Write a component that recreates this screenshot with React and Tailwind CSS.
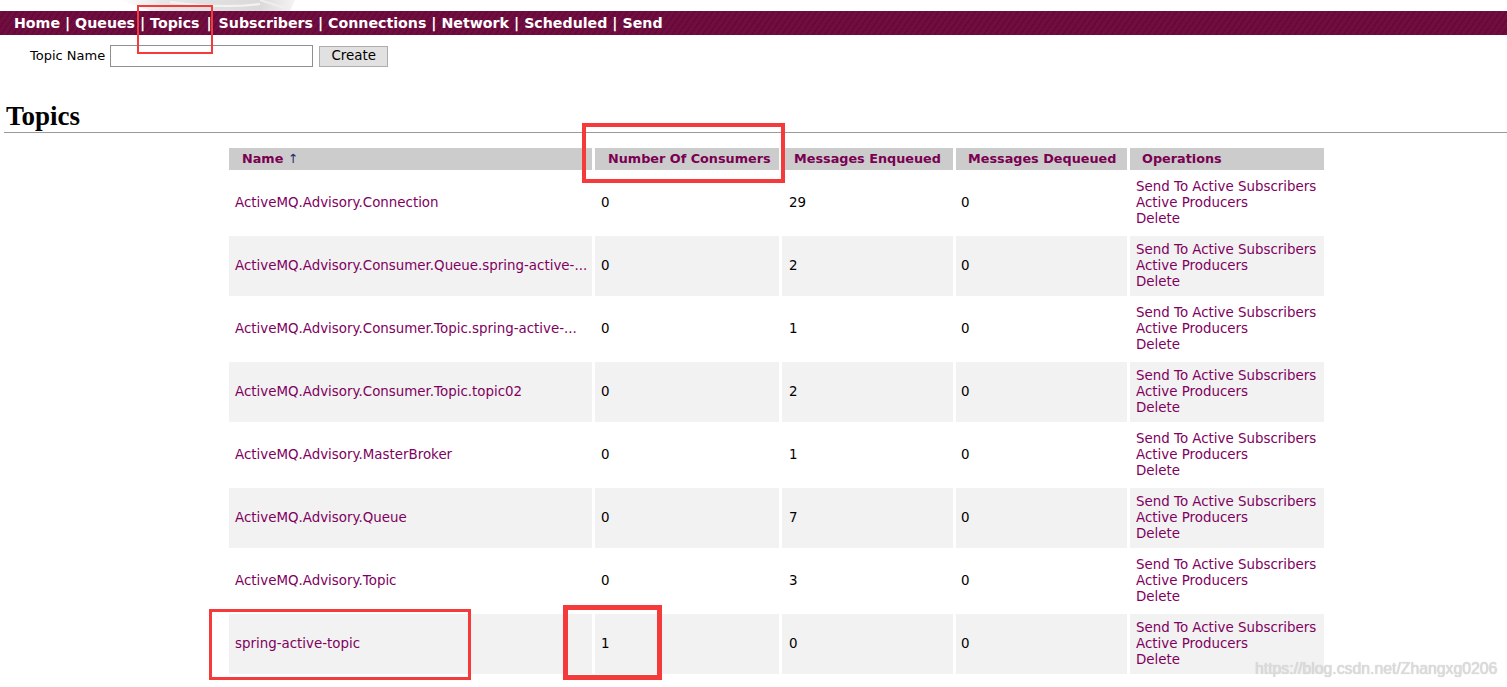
import React from "react";

const topics = [
  { name: "ActiveMQ.Advisory.Connection", consumers: 0, enq: 29, deq: 0 },
  { name: "ActiveMQ.Advisory.Consumer.Queue.spring-active-...", consumers: 0, enq: 2, deq: 0 },
  { name: "ActiveMQ.Advisory.Consumer.Topic.spring-active-...", consumers: 0, enq: 1, deq: 0 },
  { name: "ActiveMQ.Advisory.Consumer.Topic.topic02", consumers: 0, enq: 2, deq: 0 },
  { name: "ActiveMQ.Advisory.MasterBroker", consumers: 0, enq: 1, deq: 0 },
  { name: "ActiveMQ.Advisory.Queue", consumers: 0, enq: 7, deq: 0 },
  { name: "ActiveMQ.Advisory.Topic", consumers: 0, enq: 3, deq: 0 },
  { name: "spring-active-topic", consumers: 1, enq: 0, deq: 0 },
];

const navItems = ["Home", "Queues", "Topics", "Subscribers", "Connections", "Network", "Scheduled", "Send"];

function Logo() {
  return (
    <svg width="200" height="11" viewBox="0 0 200 11" className="ml-[110px]">
      <defs>
        <linearGradient id="fade" x1="0" x2="1" y1="0" y2="0">
          <stop offset="0" stopColor="#ffffff" />
          <stop offset="0.25" stopColor="#e6e6e6" />
          <stop offset="0.8" stopColor="#dadada" />
          <stop offset="1" stopColor="#f4f4f4" />
        </linearGradient>
      </defs>
      <path d="M10 0 L185 0 L180 11 L40 11 Z" fill="url(#fade)" />
      <path d="M60 2 C90 6 120 8 150 4" stroke="#f3f3f3" strokeWidth="2" fill="none" />
      <path d="M150 0 L175 8" stroke="#eeeeee" strokeWidth="2" fill="none" />
    </svg>
  );
}

export default function App() {
  return (
    <div className="relative w-[1507px] h-[687px] overflow-hidden bg-white font-['DejaVu_Sans',Verdana,sans-serif] text-[13.4px] text-black">
      <div className="h-[11px] flex">
        <Logo />
      </div>
      <nav className="h-[24px] flex items-center pt-px pl-[14px] text-white font-bold text-[14.2px] bg-[repeating-linear-gradient(-55deg,#720d41_0px,#720d41_3px,#660a37_3px,#660a37_5px)]">
        {navItems.map((item, i) => (
          <span key={item} className="whitespace-pre">
            {item}
            {i < navItems.length - 1 ? (
              <span className={i === 2 ? "px-[2px]" : ""}> | </span>
            ) : null}
          </span>
        ))}
      </nav>

      <div className="mt-[10px] flex items-center pl-[30px] h-[22px]">
        <span className="text-[13px] mr-[5px]">Topic Name</span>
        <input className="w-[203px] h-[22px] border border-[#8f8f8f] bg-white" />
        <button className="ml-[6px] w-[69px] h-[21px] border border-[#adadad] bg-[#e1e1e1] text-[13.4px] leading-none">
          Create
        </button>
      </div>

      <h2 className="mt-[34px] pl-[6px] font-['Liberation_Serif',serif] font-bold text-[27px] leading-[30px]">Topics</h2>
      <div className="mt-px ml-[4px] h-px bg-[#9a9a9a]" />

      <table className="mt-[12px] ml-[226px] border-separate border-spacing-[3px] table-fixed w-[1101px]">
        <colgroup>
          <col className="w-[363px]" />
          <col className="w-[184px]" />
          <col className="w-[171px]" />
          <col className="w-[171px]" />
          <col className="w-[194px]" />
        </colgroup>
        <thead>
          <tr className="h-[22px] bg-[#cccccc] text-[#7a0052] font-bold text-[12.8px]">
            <th className="text-left pl-[13px] p-0 font-bold">
              Name <span className="font-normal text-[#2a2a6a]">↑</span>
            </th>
            <th className="text-left pl-[13px] p-0 font-bold">Number Of Consumers</th>
            <th className="text-left pl-[12px] p-0 font-bold">Messages Enqueued</th>
            <th className="text-left pl-[12px] p-0 font-bold">Messages Dequeued</th>
            <th className="text-left pl-[12px] p-0 font-bold">Operations</th>
          </tr>
        </thead>
        <tbody>
          {topics.map((t, i) => (
            <tr key={t.name} className={i % 2 === 1 ? "h-[60px] bg-[#f2f2f2]" : "h-[60px] bg-white"}>
              <td className="pl-[6px] p-0 text-[#800060] whitespace-nowrap overflow-hidden">{t.name}</td>
              <td className="pl-[6px] p-0">{t.consumers}</td>
              <td className="pl-[7px] p-0">{t.enq}</td>
              <td className="pl-[5px] p-0">{t.deq}</td>
              <td className="pl-[6px] p-0 text-[#800060] leading-[16px] whitespace-nowrap">
                <div>Send To Active Subscribers</div>
                <div>Active Producers</div>
                <div>Delete</div>
              </td>
            </tr>
          ))}
        </tbody>
      </table>

      {/* highlight frames */}
      <div className="absolute left-[137px] top-[5px] w-[76px] h-[49px] border-2 border-[#f43a3a]" />
      <div className="absolute left-[582px] top-[123px] w-[203px] h-[60px] border-4 border-[#f43a3a]" />
      <div className="absolute left-[209px] top-[609px] w-[262px] h-[71px] border-[3px] border-[#f43a3a]" />
      <div className="absolute left-[563px] top-[605px] w-[99px] h-[75px] border-[5px] border-[#f43a3a]" />

      <div className="absolute left-[1255px] top-[657px] font-['Liberation_Sans',Arial,sans-serif] text-[15.8px] text-[#dcdcdc] [text-shadow:0_0_1px_#bdbdbd]">
        https://blog.csdn.net/Zhangxg0206
      </div>
    </div>
  );
}
